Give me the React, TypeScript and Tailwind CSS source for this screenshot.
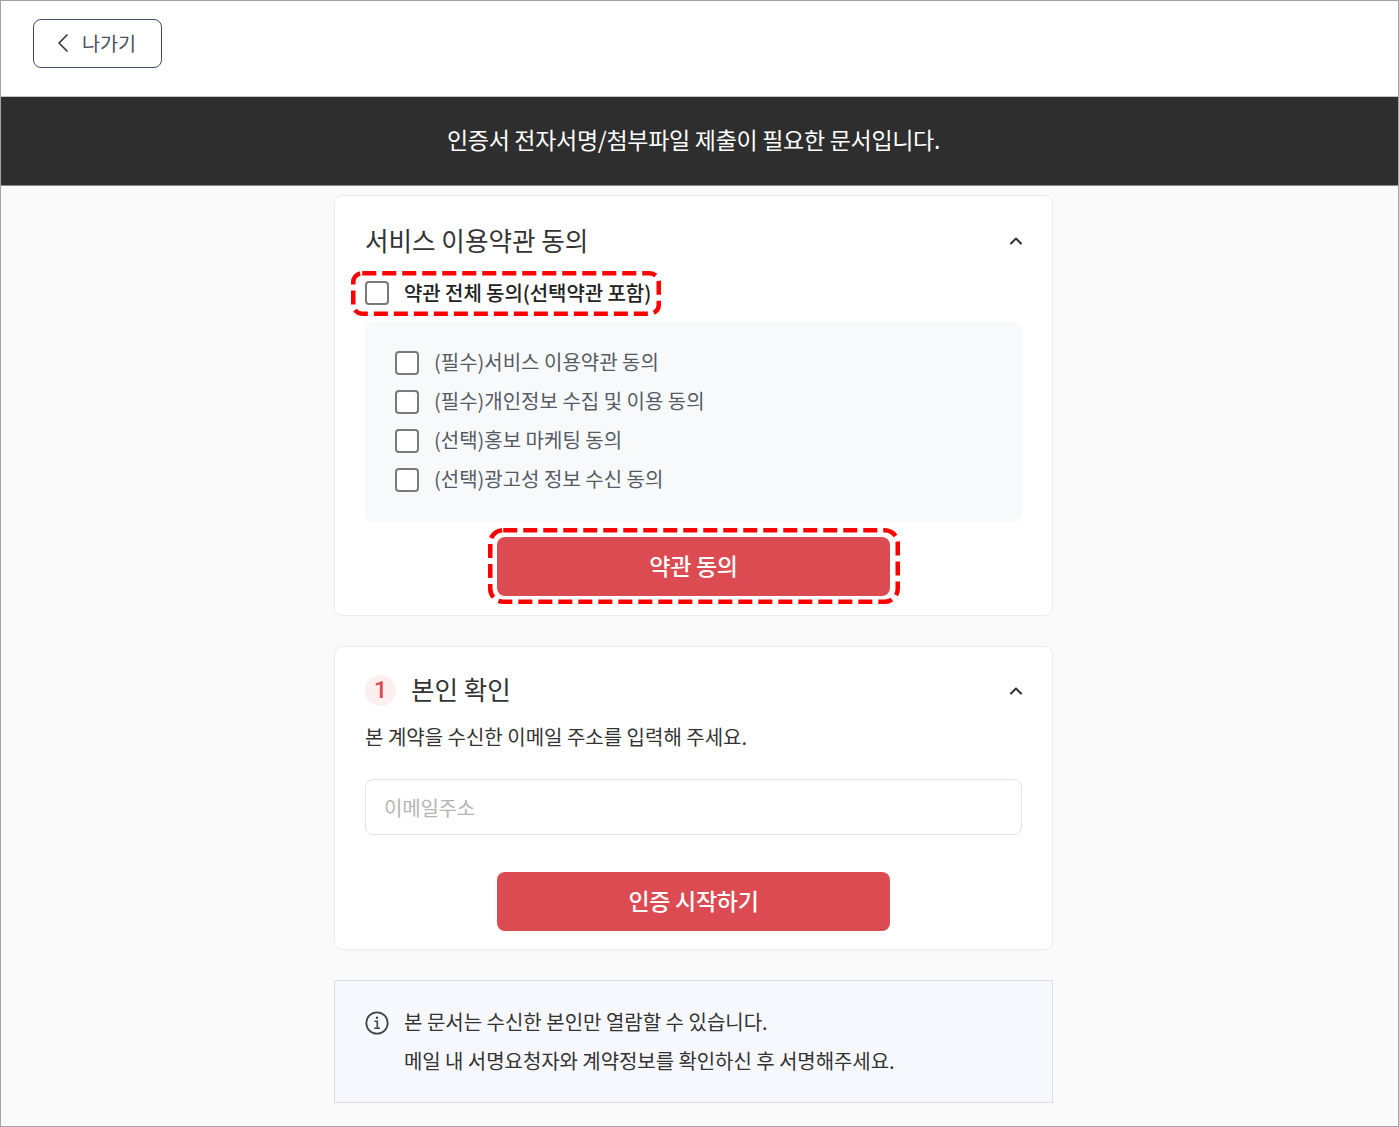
import React from "react"
import { ChevronLeft, ChevronUp } from "lucide-react"

const font = { fontFamily: '"Noto Sans CJK KR", "Noto Sans", sans-serif' }

const terms = [
  { label: "(필수)서비스 이용약관 동의", mt: "" },
  { label: "(필수)개인정보 수집 및 이용 동의", mt: "mt-[15px]" },
  { label: "(선택)홍보 마케팅 동의", mt: "mt-[15px]" },
  { label: "(선택)광고성 정보 수신 동의", mt: "mt-[15px]" }
]

const Checkbox: React.FC = () => (
  <span className="block w-6 h-6 shrink-0 rounded-[4px] border-2 border-[#7a7a7a] bg-white" />
)

// red annotation drawn over the screenshot
const DashedMark: React.FC<{ className: string; w: number; h: number; r: number }> = ({ className, w, h, r }) => (
  <svg width={w} height={h} className={`absolute pointer-events-none ${className}`} fill="none">
    <rect x="2.25" y="2.25" width={w - 4.5} height={h - 4.5} rx={r} stroke="#ff0000" strokeWidth="4.5" strokeDasharray="14 6" />
  </svg>
)

const App: React.FC = () => {
  return (
    <div
      className="w-[1399px] h-[1127px] overflow-hidden border border-[#a3a3a3] bg-[#fafafa] box-border"
      style={font}
    >
      <header className="h-[96px] bg-white border-b border-[#c4c4c4] pl-[32px] pt-[18px]">
        <button className="flex items-center w-[128.5px] h-[49px] rounded-lg border border-[#3d4a66] bg-white pl-[13px] pb-[2px]">
          <ChevronLeft size={32} strokeWidth={1.3} className="text-[#2f3747]" />
          <span className="ml-[3px] text-[19.6px] text-[#4a5160]">나가기</span>
        </button>
      </header>

      <div className="h-[89px] bg-[#2e2e2e] border-b border-[#8a8a8a] flex items-center justify-center pr-[12px] pb-[3px]">
        <p className="text-[23px] tracking-[-0.3px] text-white">인증서 전자서명/첨부파일 제출이 필요한 문서입니다.</p>
      </div>

      <main className="w-[719px] ml-[333px] pt-[9px]">
        <section className="relative h-[421px] rounded-lg border border-[#ececec] bg-white px-[30px] pt-[24px]">
          <div className="flex items-center justify-between h-[40px]">
            <h2 className="text-[25.6px] font-normal text-[#333]">서비스 이용약관 동의</h2>
            <ChevronUp size={20} strokeWidth={2.5} className="text-[#333] -mr-[4px] mt-[2px]" />
          </div>

          <label className="flex items-center h-[24px] mt-[21px]">
            <Checkbox />
            <span className="ml-[15px] text-[20px] font-medium tracking-[-0.08px] text-[#222]">약관 전체 동의(선택약관 포함)</span>
          </label>
          <DashedMark className="left-[16px] top-[75px]" w={310} h={45} r={9} />

          <div className="mt-[17px] h-[200px] rounded-lg bg-[#f8f9fb] pl-[30px] pt-[29px]">
            {terms.map((term) => (
              <label key={term.label} className={`flex items-center h-[24px] ${term.mt}`}>
                <Checkbox />
                <span className="ml-[15px] -mt-[2px] text-[20px] text-[#555b66]">{term.label}</span>
              </label>
            ))}
          </div>

          <button className="block mx-auto mt-[15px] w-[393px] h-[59px] pb-[2px] rounded-lg bg-[#dc4b51] text-[23px] font-medium tracking-[-0.3px] text-white">
            약관 동의
          </button>
          <DashedMark className="left-[153px] top-[332px]" w={412} h={76} r={13} />
        </section>

        <section className="mt-[30px] h-[304px] rounded-lg border border-[#ececec] bg-white px-[30px] pt-[22px]">
          <div className="flex items-center justify-between h-[40px]">
            <div className="flex items-center">
              <span
                className="flex items-center justify-center w-[31px] h-[31px] mt-[3px] rounded-full bg-[#fbeff0] text-[24px] font-medium text-[#dc4b51]"
                style={{ fontFamily: "Roboto, sans-serif" }}
              >
                1
              </span>
              <h2 className="ml-[15px] text-[25.6px] font-normal text-[#333]">본인 확인</h2>
            </div>
            <ChevronUp size={20} strokeWidth={2.5} className="text-[#333] -mr-[4px] mt-[3px]" />
          </div>
          <p className="mt-[13px] text-[20px] text-[#333]">본 계약을 수신한 이메일 주소를 입력해 주세요.</p>
          <input
            placeholder="이메일주소"
            readOnly
            className="block mt-[27px] w-full h-[56px] rounded-lg border border-[#e3e3e3] bg-white px-[18px] text-[20px] tracking-[-0.2px] placeholder:text-[#b5b5b5] outline-none"
          />
          <button className="block mx-auto mt-[37px] w-[393px] h-[59px] pb-[2px] rounded-lg bg-[#dc4b51] text-[23px] font-medium tracking-[-0.3px] text-white">
            인증 시작하기
          </button>
        </section>

        <section className="mt-[30px] h-[123px] border border-[#dedede] bg-[#f7f8fd] pl-[30px] pt-[21px]">
          <div className="flex items-start">
            <svg width="24" height="24" viewBox="0 0 24 24" fill="none" stroke="#444" strokeWidth="1.8" className="mt-[9px] shrink-0">
              <circle cx="12" cy="12" r="10.7" />
              <path d="M9.4 10.2h2.9v6.9M9.2 17.3h5.8" strokeWidth="1.6" />
              <circle cx="12" cy="6.8" r="1.2" fill="#444" stroke="none" />
            </svg>
            <div className="ml-[15px] text-[20px] leading-[39px] text-[#333]">
              <p>본 문서는 수신한 본인만 열람할 수 있습니다.</p>
              <p className="tracking-[-0.06px]">메일 내 서명요청자와 계약정보를 확인하신 후 서명해주세요.</p>
            </div>
          </div>
        </section>
      </main>
    </div>
  )
}

export default App
